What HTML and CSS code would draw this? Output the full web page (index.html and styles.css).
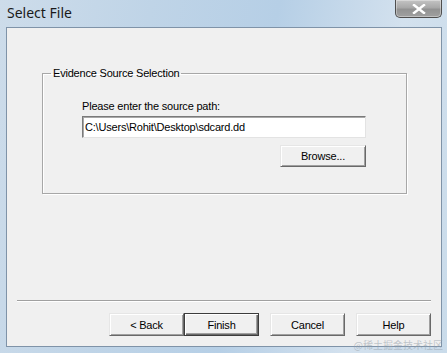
FILE: index.html
```html
<!DOCTYPE html>
<html lang="en">
  <head>
    <meta charset="UTF-8" />
    <meta name="viewport" content="width=device-width, initial-scale=1.0" />
    <title>Select File</title>
    <link rel="stylesheet" href="styles.css">
  </head>
  <body>
    <div class="window">
      <div class="titlebar">
        <span class="title">Select File</span>
        <button class="close" aria-label="Close">
          <svg width="14" height="10" viewBox="0 0 14 10">
            <path d="M2 1 L12 9 M12 1 L2 9" stroke="#fff" stroke-width="2.4" stroke-linecap="square" fill="none" />
          </svg>
        </button>
      </div>
      <div class="client">
        <fieldset class="group">
          <legend>Evidence Source Selection</legend>
          <div class="group-body">
            <label class="label" for="path">Please enter the source path:</label>
            <input class="path" id="path" type="text" value="C:\Users\Rohit\Desktop\sdcard.dd" />
            <div class="browse-row">
              <button class="btn browse">Browse...</button>
            </div>
          </div>
        </fieldset>
        <div class="footer">
          <div class="separator"></div>
          <div class="buttons">
            <button class="btn">&lt; Back</button>
            <button class="btn default gap">Finish</button>
            <button class="btn gap">Cancel</button>
            <button class="btn">Help</button>
          </div>
        </div>
      </div>
      <span class="watermark">@稀土掘金技术社区</span>
    </div>
  </body>
</html>
```

FILE: styles.css
```css
html,
body {
  margin: 0;
  width: 447px;
  height: 353px;
  overflow: hidden;
}
body {
  background: linear-gradient(100deg, #cddcea 0%, #bfd4e7 30%, #b6cfe6 55%, #d3e1ee 80%, #c9dbea 100%);
  font-family: "Liberation Sans", Arial, sans-serif;
  font-size: 11px;
  letter-spacing: -0.2px;
  color: #000;
}
.window {
  position: relative;
  height: 353px;
  display: flex;
  flex-direction: column;
  box-sizing: border-box;
}
.titlebar {
  height: 27px;
  display: flex;
  justify-content: space-between;
  align-items: flex-start;
  padding-left: 7px;
}
.title {
  font-family: "Noto Sans", "Open Sans", sans-serif;
  font-size: 14px;
  letter-spacing: 0;
  line-height: 26px;
  color: #1a1a1a;
}
.close {
  width: 47px;
  height: 18px;
  margin-right: 5px;
  padding: 0;
  border: 1px solid #4e4e4e;
  border-top: none;
  border-radius: 0 0 5px 5px;
  background: linear-gradient(#c4c4c4, #a8a8a8 45%, #929292 55%, #a0a0a0);
  box-shadow: inset 0 0 0 1px rgba(255, 255, 255, 0.35);
  display: flex;
  align-items: center;
  justify-content: center;
}
.client {
  flex: 1;
  margin: 0 5px 6px 6px;
  border: 1px solid #7f93a8;
  background: #f0f0f0;
  display: flex;
  flex-direction: column;
}
.group {
  margin: 39px 34px 0 35px;
  padding: 20px 0 26px 8px;
  border: 1px solid #a7a7a7;
  box-shadow: inset 1px 1px 0 #fff, 1px 1px 0 #fff;
}
.group legend {
  padding: 0 2px;
  line-height: 13px;
}
.group-body {
  margin-left: 31px;
  width: 284px;
}
.label {
  display: block;
  line-height: 13px;
  margin-bottom: 3px;
}
.path {
  display: block;
  box-sizing: border-box;
  width: 284px;
  height: 22px;
  margin: 0;
  padding: 0 2px;
  border: 1px solid;
  border-color: #7a7a7a #e3e3e3 #e3e3e3 #7a7a7a;
  box-shadow: inset 1px 1px 0 #a8a8a8;
  background: #fff;
  font: inherit;
  letter-spacing: -0.2px;
  color: #000;
  outline: none;
}
.browse-row {
  display: flex;
  justify-content: flex-end;
  margin-top: 7px;
}
.btn {
  box-sizing: border-box;
  width: 75px;
  height: 23px;
  padding: 0;
  border: 1px solid;
  border-color: #e6e6e6 #696969 #696969 #e6e6e6;
  box-shadow: inset 1px 1px 0 #fff, inset -1px -1px 0 #a0a0a0;
  background: #f0f0f0;
  font: inherit;
  letter-spacing: -0.2px;
  color: #000;
}
.browse {
  width: 86px;
  height: 22px;
}
.default {
  border: 1px solid #3c3c3c;
  box-shadow: inset 1px 1px 0 #fff, inset -1px -1px 0 #696969, inset -2px -2px 0 #a0a0a0;
}
.gap {
  margin-right: 11px;
}
.footer {
  margin-top: auto;
  padding-bottom: 10px;
}
.separator {
  margin: 0 10px 0 10px;
  height: 1px;
  background: #a0a0a0;
  border-bottom: 1px solid #fff;
}
.buttons {
  display: flex;
  justify-content: flex-end;
  margin-top: 11px;
  padding-right: 10px;
}
.watermark {
  position: absolute;
  right: 4px;
  bottom: 1px;
  font-family: "Noto Sans CJK SC", sans-serif;
  font-size: 10px;
  letter-spacing: 0;
  color: rgba(150, 160, 170, 0.55);
}
```
